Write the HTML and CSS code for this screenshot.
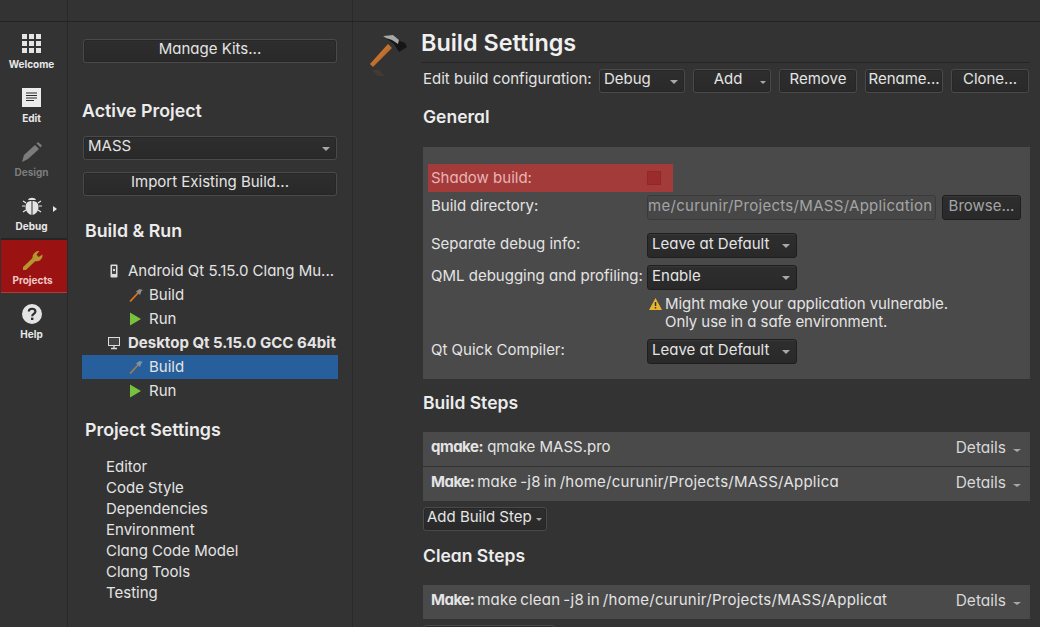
FILE: index.html
```html
<!DOCTYPE html>
<html lang="en">
<head>
    <meta charset="UTF-8">
    <title>Build Settings</title>
    <link rel="stylesheet" href="styles.css">
</head>
<body>
    <div class="topbar">
        <div class="topbar-side"></div>
        <div class="topbar-nav"></div>
    </div>
    <div class="window">
        <!-- mode selector -->
        <div class="modebar">
            <div class="mode">
                <svg class="mode-icon" width="20" height="20" viewBox="0 0 20 20" fill="#e4e4e4">
                    <rect x="0" y="0" width="5" height="5"/><rect x="7" y="0" width="5" height="5"/><rect x="14" y="0" width="5" height="5"/>
                    <rect x="0" y="7" width="5" height="5"/><rect x="7" y="7" width="5" height="5"/><rect x="14" y="7" width="5" height="5"/>
                    <rect x="0" y="14" width="5" height="5"/><rect x="7" y="14" width="5" height="5"/><rect x="14" y="14" width="5" height="5"/>
                </svg>
                <span>Welcome</span>
            </div>
            <div class="mode">
                <svg class="mode-icon" width="20" height="20" viewBox="0 0 20 20">
                    <rect x="0" y="0" width="19" height="19" fill="#ececec"/>
                    <path d="M4 5h11M4 7.5h11M4 10h11M4 12.5h8" stroke="#2a2a2a" stroke-width="1"/>
                </svg>
                <span>Edit</span>
            </div>
            <div class="mode mode-off">
                <svg class="mode-icon" width="20" height="20" viewBox="0 0 20 20" fill="#7c7c7c">
                    <path d="M0 20 L2 13 L13 3 L17 7 L6 17 Z"/>
                    <path d="M14.5 1.5 L16 0 L20 3.5 L18.5 5.5 Z"/>
                </svg>
                <span>Design</span>
            </div>
            <div class="mode">
                <svg class="mode-icon" width="20" height="20" viewBox="0 0 20 20">
                    <path d="M1 5l3 2M0 10h3M1 16l3-2M19 5l-3 2M20 10h-3M19 16l-3-2" stroke="#e4e4e4" stroke-width="1.2"/>
                    <path d="M6 4 C7 1 13 1 14 4 Z" fill="#e4e4e4"/>
                    <path d="M9.5 5 C6 5 3.5 7 3.5 11 C3.5 15 6 18 9.5 19 Z" fill="#e4e4e4"/>
                    <path d="M10.5 5 C14 5 16.5 7 16.5 11 C16.5 15 14 18 10.5 19 Z" fill="#e4e4e4"/>
                </svg>
                <span>Debug</span>
                <i class="mode-arrow"></i>
            </div>
            <div class="mode mode-active">
                <svg class="mode-icon" width="20" height="20" viewBox="0 0 20 20">
                    <path d="M1.5 18.5 L11 9.5" stroke="#b5962f" stroke-width="4" stroke-linecap="round"/>
                    <path d="M9.5 9 C9 4 12.5 0.5 16.5 1 L13.5 4.5 L15.5 7 L19.5 4.5 C20 9 15.5 12.5 11 11 Z" fill="#b5962f"/>
                </svg>
                <span>Projects</span>
            </div>
            <div class="mode">
                <svg class="mode-icon" width="20" height="20" viewBox="0 0 20 20">
                    <circle cx="10" cy="10" r="10" fill="#e4e4e4"/>
                    <path d="M6.8 7.6 C6.8 3.8 13.4 3.8 13.4 7.5 C13.4 10 10.2 9.8 10.2 12.2" fill="none" stroke="#2e2e2e" stroke-width="2.2"/>
                    <rect x="9" y="13.6" width="2.4" height="2.4" fill="#2e2e2e"/>
                </svg>
                <span>Help</span>
            </div>
        </div>

        <!-- project navigation -->
        <div class="nav">
            <div class="btn nav-btn">Manage Kits...</div>
            <h2 class="nav-title first">Active Project</h2>
            <div class="btn combo nav-combo">MASS<i class="caret"></i></div>
            <div class="btn nav-btn import">Import Existing Build...</div>
            <h2 class="nav-title indent build-run">Build &amp; Run</h2>
            <div class="tree">
                <div class="tree-row kit">
                    <svg class="kit-icon" width="8" height="14" viewBox="0 0 8 14">
                        <rect x="0.5" y="0.5" width="7" height="13" rx="1" fill="#ddd"/>
                        <rect x="2" y="2" width="4" height="8" fill="#444"/>
                        <rect x="3" y="5" width="2" height="2" fill="#ddd"/>
                    </svg>
                    <span>Android Qt 5.15.0 Clang Mu...</span>
                </div>
                <div class="tree-row step">
                    <svg class="step-icon" width="14" height="14" viewBox="0 0 14 14">
                        <path d="M1 13.5 L9 5" stroke="#d9771f" stroke-width="1.8"/>
                        <path d="M7 3.5 L10.5 1 L14 2 L12.5 3 L11 7 Z" fill="#8d8d8d"/>
                    </svg>
                    <span>Build</span>
                </div>
                <div class="tree-row step">
                    <svg class="step-icon" width="14" height="14" viewBox="0 0 14 14"><path d="M1 0.5 L12 7 L1 13.5 Z" fill="#78c13c"/></svg>
                    <span>Run</span>
                </div>
                <div class="tree-row kit kit-current">
                    <svg class="kit-icon wide" width="12" height="14" viewBox="0 0 12 14">
                        <rect x="0.5" y="1.5" width="11" height="8" fill="#444" stroke="#ddd"/>
                        <path d="M6 10v2M3 12.5h6" stroke="#ddd" stroke-width="1.4"/>
                    </svg>
                    <span>Desktop Qt 5.15.0 GCC 64bit</span>
                </div>
                <div class="tree-row step selected">
                    <svg class="step-icon" width="14" height="14" viewBox="0 0 14 14">
                        <path d="M1 13.5 L9 5" stroke="#a8794f" stroke-width="1.8"/>
                        <path d="M7 3.5 L10.5 1 L14 2 L12.5 3 L11 7 Z" fill="#7f93a8"/>
                    </svg>
                    <span>Build</span>
                </div>
                <div class="tree-row step">
                    <svg class="step-icon" width="14" height="14" viewBox="0 0 14 14"><path d="M1 0.5 L12 7 L1 13.5 Z" fill="#78c13c"/></svg>
                    <span>Run</span>
                </div>
            </div>
            <h2 class="nav-title indent settings-title">Project Settings</h2>
            <ul class="settings-list">
                <li>Editor</li>
                <li>Code Style</li>
                <li>Dependencies</li>
                <li>Environment</li>
                <li>Clang Code Model</li>
                <li>Clang Tools</li>
                <li>Testing</li>
            </ul>
        </div>

        <!-- build settings page -->
        <div class="main">
            <div class="main-icon">
                <svg width="40" height="46" viewBox="0 0 40 46">
                    <defs>
                        <linearGradient id="handle" x1="0" y1="0" x2="1" y2="1">
                            <stop offset="0" stop-color="#e8903f"/>
                            <stop offset="1" stop-color="#9c4f18"/>
                        </linearGradient>
                    </defs>
                    <path d="M2 32 L20 12 L24 16 L5 35 Z" fill="url(#handle)"/>
                    <path d="M4 38 L11 38 L17 44 L10 44 Z" fill="#5a4030" opacity="0.5"/>
                    <path d="M15 4 L25 3 L32 9 L37 11 L39 15 L31 20 L26 12 L18 6 Z" fill="#161616"/>
                    <path d="M15 4 L25 3 L31 8 L30 12 L24 8 L18 6 Z" fill="#a8a8a8"/>
                </svg>
            </div>
            <div class="content">
                <h1 class="page-title">Build Settings</h1>
                <div class="toolbar">
                    <span class="toolbar-label">Edit build configuration:</span>
                    <div class="btn combo config">Debug<i class="caret"></i></div>
                    <div class="btn add">Add<i class="caret small"></i></div>
                    <div class="btn tool">Remove</div>
                    <div class="btn tool">Rename...</div>
                    <div class="btn tool">Clone...</div>
                </div>

                <h2 class="section general">General</h2>
                <div class="panel">
                    <div class="shadow-row">
                        <span class="shadow-label">Shadow build:</span>
                        <i class="checkbox"></i>
                    </div>
                    <div class="form-row dir-row">
                        <label>Build directory:</label>
                        <div class="path-input">me/curunir/Projects/MASS/Application</div>
                        <div class="btn browse">Browse...</div>
                    </div>
                    <div class="form-row debug-row">
                        <label>Separate debug info:</label>
                        <div class="btn combo form-combo">Leave at Default<i class="caret"></i></div>
                    </div>
                    <div class="form-row qml-row">
                        <label>QML debugging and profiling:</label>
                        <div class="btn combo form-combo">Enable<i class="caret"></i></div>
                    </div>
                    <div class="warning">
                        <svg class="warning-icon" width="13" height="12" viewBox="0 0 13 12">
                            <path d="M6.5 0 L13 12 H0 Z" fill="#e8b62a"/>
                            <path d="M6.5 4v4M6.5 9v1.6" stroke="#333" stroke-width="1.5"/>
                        </svg>
                        <div>Might make your application vulnerable.<br>Only use in a safe environment.</div>
                    </div>
                    <div class="form-row quick-row">
                        <label>Qt Quick Compiler:</label>
                        <div class="btn combo form-combo">Leave at Default<i class="caret"></i></div>
                    </div>
                </div>

                <h2 class="section steps-title">Build Steps</h2>
                <div class="step-row first-step">
                    <div class="step-text"><b>qmake:</b> qmake MASS.pro</div>
                    <span class="details">Details<i class="caret"></i></span>
                </div>
                <div class="step-row second-step">
                    <div class="step-text clip-build"><b>Make:</b> make -j8 in /home/curunir/Projects/MASS/Application</div>
                    <span class="details">Details<i class="caret"></i></span>
                </div>
                <div class="btn add-step">Add Build Step<i class="caret small"></i></div>

                <h2 class="section clean-title">Clean Steps</h2>
                <div class="step-row first-step">
                    <div class="step-text clip-clean"><b>Make:</b> make clean -j8 in /home/curunir/Projects/MASS/Application</div>
                    <span class="details">Details<i class="caret"></i></span>
                </div>
                <div class="btn add-clean">Add Clean Step<i class="caret small"></i></div>
            </div>
        </div>
    </div>
</body>
</html>
```

FILE: styles.css
```css
* {
    box-sizing: border-box;
}

html, body {
    height: 627px;
    margin: 0;
    overflow: hidden;
}

body {
    background-color: #333333;
    color: #e4e4e4;
    font-family: Inter, "Open Sans", sans-serif;
    font-feature-settings: "cv11" 1;
    font-size: 15px;
}

h1, h2, ul {
    margin: 0;
    padding: 0;
    font-weight: 600;
}

.topbar {
    display: flex;
    height: 22px;
    border-bottom: 1px solid #232323;
}

.topbar-side {
    width: 68px;
    height: 21px;
    border-right: 1px solid #292929;
}

.topbar-nav {
    width: 285px;
    height: 21px;
    border-right: 1px solid #292929;
}

.window {
    display: flex;
    height: 605px;
}

/* mode selector */
.modebar {
    width: 68px;
    flex: none;
    padding-top: 2px;
    border-right: 1px solid #292929;
}

.mode {
    position: relative;
    display: flex;
    flex-direction: column;
    align-items: center;
    height: 54px;
    padding: 10px 4px 0 0;
    font-size: 10px;
    font-weight: 700;
    color: #e8e8e8;
}

.mode span {
    margin-top: 3px;
    line-height: 14px;
}

.mode-icon {
    display: block;
    flex: none;
}

.mode-off {
    color: #7c7c7c;
}

.mode-arrow {
    position: absolute;
    left: 53px;
    top: 20px;
    border-left: 4px solid #e4e4e4;
    border-top: 3.5px solid transparent;
    border-bottom: 3.5px solid transparent;
}

.mode-active {
    margin: 0 0 1px 1px;
    height: 53px;
    padding-right: 3px;
    background-color: #9b1212;
    border-bottom: 1px solid #b23a3a;
    box-shadow: 0 -2px 0 #252525;
    color: #f0c8c8;
}

/* shared button look */
.btn {
    display: flex;
    align-items: center;
    justify-content: center;
    position: relative;
    height: 24px;
    padding-bottom: 5px;
    background: linear-gradient(#2e2e2e, #292929);
    border: 1px solid #4a4a4a;
    border-radius: 3px;
    box-shadow: inset 0 0 0 1px #272727;
    color: #e4e4e4;
    white-space: nowrap;
}

.panel .btn {
    border-color: #1e1e1e;
    box-shadow: inset 0 1px 0 #383838;
}

.combo {
    justify-content: flex-start;
    padding-left: 4px;
}

.caret {
    display: inline-block;
    border-top: 4px solid #a8a8a8;
    border-left: 4px solid transparent;
    border-right: 4px solid transparent;
}

.caret.small {
    border-top-width: 3px;
    border-left-width: 3px;
    border-right-width: 3px;
}

.combo .caret {
    margin-left: auto;
    margin-right: 6px;
    margin-top: 6px;
}

/* project navigation */
.nav {
    width: 285px;
    flex: none;
    padding: 17px 15px 0;
    border-right: 1px solid #292929;
}

.nav-title {
    height: 24px;
    line-height: 24px;
    font-size: 17.8px;
    color: #ececec;
}

.nav-title.first {
    margin-top: 36px;
    margin-left: -1px;
}

.nav-title.indent {
    margin-left: 2px;
}

.nav-combo {
    margin-top: 13px;
}

.import {
    margin-top: 12px;
}

.build-run {
    margin-top: 23px;
}

.tree {
    margin: 16px -1px 0;
}

.tree-row {
    display: flex;
    align-items: center;
    height: 24px;
    white-space: nowrap;
}

.tree-row span {
    margin-bottom: 1px;
}

.kit {
    padding-left: 28px;
}

.kit-icon {
    flex: none;
    margin-right: 10px;
}

.kit-icon.wide {
    margin-left: -2px;
    margin-right: 8px;
}

.kit-current {
    font-weight: 700;
}

.step {
    padding-left: 47px;
}

.step-icon {
    flex: none;
    margin-right: 6px;
}

.selected {
    background-color: #265f9c;
}

.settings-title {
    margin-top: 15px;
}

.settings-list {
    margin-top: 14px;
    padding-left: 23px;
    list-style: none;
    font-weight: 400;
}

.settings-list li {
    height: 21px;
    line-height: 21px;
}

/* build settings page */
.main {
    flex: 1;
    display: flex;
    min-width: 0;
}

.main-icon {
    width: 68px;
    flex: none;
    padding: 10px 0 0 15px;
}

.content {
    width: 609px;
    flex: none;
}

.page-title {
    height: 41px;
    padding-top: 3px;
    line-height: 36px;
    font-size: 23.4px;
    color: #f0f0f0;
    border-bottom: 1px solid #262626;
}

.toolbar {
    display: flex;
    align-items: center;
    gap: 8px;
    margin: 6px 0 0 2px;
    height: 24px;
}

.toolbar-label {
    width: 168px;
    margin-bottom: 5px;
    white-space: nowrap;
}

.config {
    width: 86px;
}

.add {
    width: 78px;
    padding-right: 8px;
}

.add .caret {
    position: absolute;
    right: 4px;
    top: 11px;
}

.tool {
    width: 78px;
}

.section {
    height: 24px;
    line-height: 24px;
    font-size: 17.5px;
    color: #ececec;
    margin-left: 2px;
}

.general {
    margin-top: 12px;
}

.panel {
    margin: 18px 0 0 2px;
    height: 232px;
    padding-top: 17px;
    background-color: #4a4a4a;
}

.shadow-row {
    display: flex;
    align-items: center;
    justify-content: space-between;
    margin-left: 5px;
    width: 245px;
    height: 28px;
    padding: 0 12px 0 3px;
    background-color: #a33b3b;
    color: #eab4b4;
}

.shadow-label {
    margin-bottom: 2px;
}

.checkbox {
    display: block;
    width: 14px;
    height: 14px;
    background-color: #9c2b2b;
    border: 1px solid #8c2a2a;
}

.form-row {
    display: flex;
    align-items: center;
    height: 25px;
    padding-left: 8px;
}

.form-row label {
    width: 216px;
    flex: none;
    margin-bottom: 4px;
    white-space: nowrap;
}

.dir-row {
    margin-top: 3px;
}

.debug-row {
    margin-top: 13px;
}

.qml-row {
    margin-top: 7px;
}

.quick-row {
    margin-top: 8px;
}

.path-input {
    width: 289px;
    height: 25px;
    line-height: 20px;
    flex: none;
    overflow: hidden;
    white-space: nowrap;
    letter-spacing: 0.3px;
    color: #a4a4a4;
    background-color: #474747;
    border: 1px solid #3a3a3a;
    border-radius: 3px;
}

.browse {
    width: 79px;
    height: 25px;
    margin-left: 6px;
    color: #a4a4a4;
}

.form-combo {
    width: 150px;
    height: 25px;
}

.warning {
    display: flex;
    margin: 5px 0 0 224px;
    height: 36px;
    line-height: 18px;
    letter-spacing: -0.07px;
}

.warning-icon {
    flex: none;
    margin: 3px 3px 0 2px;
}

.steps-title {
    margin-top: 12px;
}

.step-row {
    display: flex;
    align-items: center;
    justify-content: space-between;
    margin-left: 2px;
    height: 34px;
    padding: 0 9px 6px 8px;
    background-color: #4a4a4a;
}

.first-step {
    margin-top: 17px;
}

.second-step {
    margin-top: 1px;
}

.step-text {
    overflow: hidden;
    white-space: nowrap;
}

.clip-build,
.clip-clean {
    letter-spacing: 0.25px;
    word-spacing: -1.5px;
}

.clip-build {
    width: 408px;
}

.clip-clean {
    width: 456px;
}

.step-text b {
    letter-spacing: -0.5px;
}

.details {
    display: flex;
    align-items: center;
    gap: 7px;
    margin-top: 2px;
    font-size: 15.5px;
    color: #d8d8d8;
}

.details .caret {
    margin-top: 6px;
    border-top-width: 3px;
}

.add-step,
.add-clean {
    justify-content: flex-start;
    gap: 4px;
    margin: 6px 0 0 2px;
    padding-left: 3px;
}

.add-step .caret,
.add-clean .caret {
    margin-top: 5px;
}

.add-step {
    width: 124px;
}

.add-clean {
    width: 132px;
}

.clean-title {
    margin-top: 13px;
}
```
